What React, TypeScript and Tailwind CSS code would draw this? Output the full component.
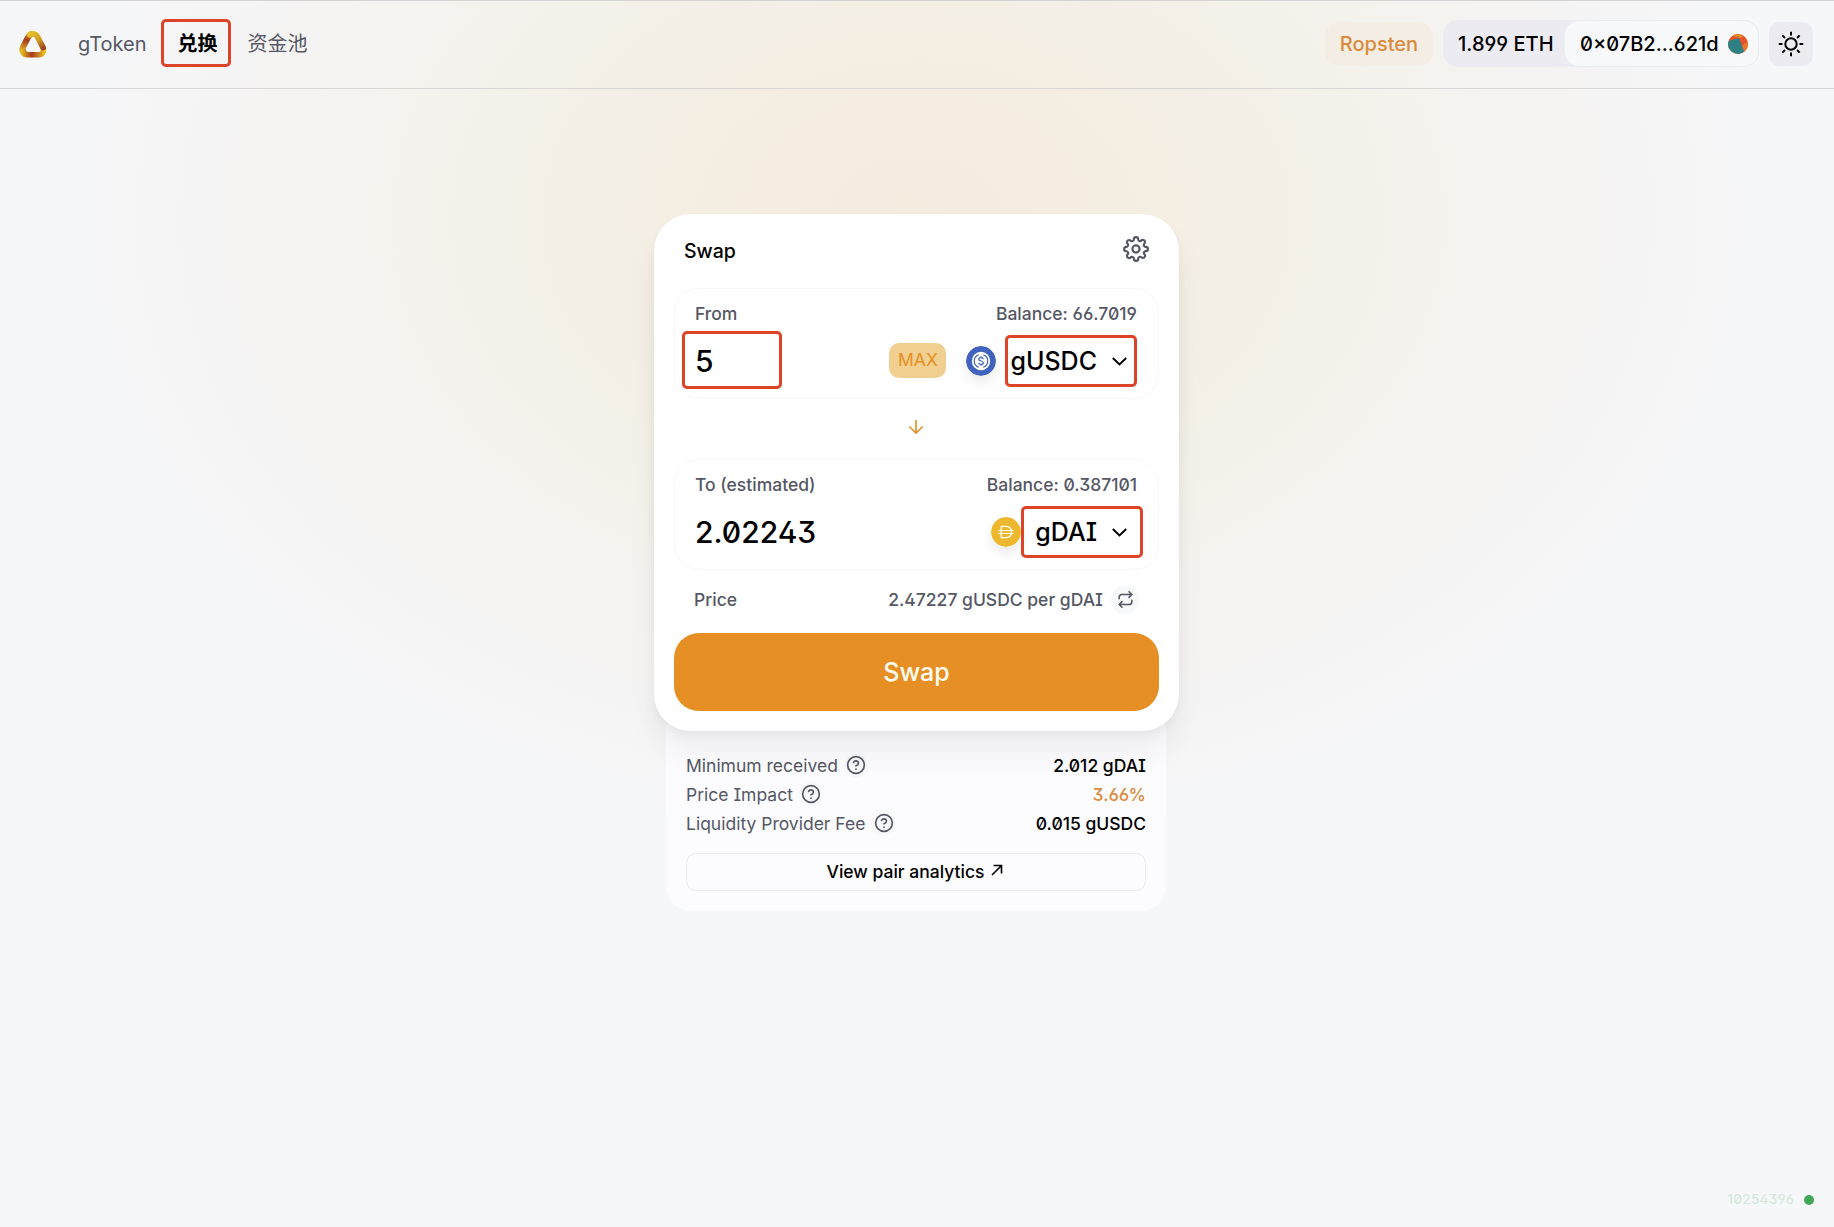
import type { ReactNode } from "react";

const inter = "font-['Inter','Noto_Sans_CJK_SC',sans-serif]";

function Mark({ className }: { className: string }) {
  return <span className={`pointer-events-none absolute rounded-[5px] border-[3px] border-[#dc4327] ${className}`} />;
}

function Logo() {
  return (
    <svg width="28" height="28" viewBox="0 0 28 28" fill="none">
      <defs>
        <linearGradient id="l1" x1="12" y1="1" x2="4" y2="22" gradientUnits="userSpaceOnUse">
          <stop offset="0" stopColor="#e3b52a" />
          <stop offset="0.45" stopColor="#a63a1c" />
          <stop offset="1" stopColor="#e6bd25" />
        </linearGradient>
        <linearGradient id="l2" x1="12" y1="3" x2="26" y2="20" gradientUnits="userSpaceOnUse">
          <stop offset="0" stopColor="#e8c02a" />
          <stop offset="0.5" stopColor="#cf9a22" />
          <stop offset="1" stopColor="#8f2a1c" />
        </linearGradient>
        <linearGradient id="l3" x1="2" y1="24" x2="26" y2="24" gradientUnits="userSpaceOnUse">
          <stop offset="0" stopColor="#e6c425" />
          <stop offset="0.45" stopColor="#a8391c" />
          <stop offset="1" stopColor="#ecc524" />
        </linearGradient>
      </defs>
      <path d="M12 4.200C10.500 5 9.500 6.500 8.700 8L4 17C2.600 20 3.500 23 6 24.300" stroke="url(#l1)" strokeWidth="6" strokeLinecap="round" />
      <path d="M4.500 21C5 23.500 7 24.800 9.500 24.800H20C23.500 24.800 25.500 21.500 24 18" stroke="url(#l3)" strokeWidth="5.500" strokeLinecap="round" />
      <path d="M10.800 4.700C13.500 3 17 4 18.600 7L24 17.500" stroke="url(#l2)" strokeWidth="5.800" strokeLinecap="round" />
    </svg>
  );
}

function Sun() {
  return (
    <svg width="28" height="28" viewBox="0 0 24 24" fill="none" stroke="#000" strokeWidth="1.700" strokeLinecap="butt">
      <circle cx="12" cy="12" r="4.900" />
      <path d="M12 1.500v3.200M12 19.300v3.200M1.500 12h3.200M19.300 12h3.200M4.600 4.600l2.200 2.200M17.200 17.200l2.200 2.200M4.600 19.400l2.200-2.200M17.200 6.800l2.200-2.200" />
    </svg>
  );
}

function Gear() {
  return (
    <svg width="26" height="26" viewBox="0 0 24 24" fill="none" stroke="#555764" strokeWidth="2" strokeLinecap="round" strokeLinejoin="round">
      <circle cx="12" cy="12" r="3.300" />
      <path d="M19.400 15a1.650 1.650 0 0 0 .33 1.820l.06.06a2 2 0 0 1 0 2.830 2 2 0 0 1-2.830 0l-.06-.06a1.650 1.650 0 0 0-1.820-.33 1.650 1.650 0 0 0-1 1.510V21a2 2 0 0 1-2 2 2 2 0 0 1-2-2v-.09A1.650 1.650 0 0 0 9 19.400a1.650 1.650 0 0 0-1.820.33l-.06.06a2 2 0 0 1-2.830 0 2 2 0 0 1 0-2.830l.06-.06a1.650 1.650 0 0 0 .33-1.820 1.650 1.650 0 0 0-1.510-1H3a2 2 0 0 1-2-2 2 2 0 0 1 2-2h.09A1.650 1.650 0 0 0 4.600 9a1.650 1.650 0 0 0-.33-1.820l-.06-.06a2 2 0 0 1 0-2.830 2 2 0 0 1 2.830 0l.06.06a1.650 1.650 0 0 0 1.820.33H9a1.650 1.650 0 0 0 1-1.510V3a2 2 0 0 1 2-2 2 2 0 0 1 2 2v.09a1.650 1.650 0 0 0 1 1.510 1.650 1.650 0 0 0 1.820-.33l.06-.06a2 2 0 0 1 2.830 0 2 2 0 0 1 0 2.830l-.06.06a1.650 1.650 0 0 0-.33 1.820V9a1.650 1.650 0 0 0 1.510 1H21a2 2 0 0 1 2 2 2 2 0 0 1-2 2h-.09a1.650 1.650 0 0 0-1.510 1z" />
    </svg>
  );
}

function Chevron() {
  return (
    <svg width="15" height="9" viewBox="0 0 15 9" fill="none" stroke="#000" strokeWidth="1.900" className="-ml-px">
      <path d="M0.800 1L7.500 7.500L14.200 1" />
    </svg>
  );
}

function Usdc() {
  return (
    <svg width="30" height="30" viewBox="0 0 30 30" fill="none" className="rounded-full shadow-[0_7px_12px_rgba(0,0,0,0.08)]">
      <circle cx="15" cy="15" r="15" fill="#4263bd" />
      <circle cx="15" cy="15" r="9.200" fill="#fff" />
      <path d="M12.700 8.700a6.700 6.700 0 0 0 0 12.600M17.300 8.700a6.700 6.700 0 0 1 0 12.600" stroke="#4263bd" strokeWidth="1.200" />
      <path d="M17.300 13.300c-.1-1-1-1.700-2.300-1.700s-2.300.7-2.300 1.700c0 2.300 4.700 1.100 4.700 3.400 0 1-1 1.700-2.400 1.700s-2.300-.7-2.400-1.700M15 10.200v1.400M15 18.400v1.400" stroke="#4263bd" strokeWidth="1.200" />
    </svg>
  );
}

function Dai() {
  return (
    <svg width="30" height="30" viewBox="0 0 30 30" fill="none" className="rounded-full shadow-[0_7px_12px_rgba(0,0,0,0.08)]">
      <circle cx="15" cy="15" r="15" fill="#eeb82e" />
      <path d="M10.200 9.300h4.600c3.500 0 5.600 2.400 5.600 5.700s-2.100 5.700-5.600 5.700h-4.600zM7.500 13.500h15M7.500 16.500h15" stroke="#fff" strokeWidth="1.200" />
    </svg>
  );
}

function Help() {
  return (
    <span className="-mt-px flex size-[25px] items-center justify-center rounded-full bg-[#f7f8fa]">
      <svg width="20" height="20" viewBox="0 0 24 24" fill="none" stroke="#555764" strokeWidth="2" strokeLinecap="round" strokeLinejoin="round">
        <circle cx="12" cy="12" r="10" />
        <path d="M9.090 9a3 3 0 0 1 5.830 1c0 2-3 3-3 3M12 17h.01" />
      </svg>
    </span>
  );
}

function TokenPanel({ label, balance, amount, children }: { label: string; balance: string; amount: ReactNode; children: ReactNode }) {
  return (
    <section className="h-[111px] rounded-[25px] border border-[#f7f8fa] pl-5 pr-[21px] pt-[15px]">
      <div className="flex h-5 items-center justify-between text-[17.5px] font-medium text-[#555764]">
        <span>{label}</span>
        <span>{balance}</span>
      </div>
      <div className="mt-[17px] flex h-10 items-center">
        <div className="relative flex-1 text-[30px] font-medium leading-10">{amount}</div>
        {children}
      </div>
    </section>
  );
}

function Detail({ label, value, tone }: { label: string; value: string; tone: string }) {
  return (
    <div className="flex h-[29px] items-center justify-between text-[17.5px]">
      <span className="flex items-center gap-[6px] text-[#555764]">
        <span className="pt-px">{label}</span>
        <Help />
      </span>
      <span className={`pt-px font-medium ${tone}`}>{value}</span>
    </div>
  );
}

export default function App() {
  return (
    <div className={`flex h-[1227px] w-full flex-col overflow-hidden bg-[#f6f7f9] bg-[radial-gradient(880px_640px_at_50%_220px,#f5ebdf_0%,#f4eee3_28%,#f4f2ec_56%,#f5f4f4_80%,#f6f7f9_100%)] text-black [font-feature-settings:'ss01','zero','cv08'] ${inter}`}>
      <header className="flex h-[89px] w-full shrink-0 items-center border-y border-b-[#d6d6d7] border-t-[#d3d3d6] pb-[2px] pl-[19px] pr-[21px] text-[20px]">
        <Logo />
        <nav className="ml-[31px] flex items-center text-[#555764]">
          <a>gToken</a>
          <a className="relative ml-[31px] font-semibold text-black">
            兑换
            <Mark className="-left-[17px] -right-[13px] -top-[10px] h-[48px]" />
          </a>
          <a className="ml-[30px]">资金池</a>
        </nav>
        <div className="ml-auto flex items-center font-medium">
          <span className="flex h-[44px] w-[108px] items-center justify-center rounded-[15px] bg-[#f4ede4] text-[#da8a3c]">Ropsten</span>
          <div className="ml-[10px] flex h-[47px] items-center rounded-[15px] bg-[#ecebf1]">
            <span className="w-[121px] whitespace-nowrap pl-[15px]">1.899 ETH</span>
            <span className="flex h-[47px] w-[195px] items-center justify-between whitespace-nowrap rounded-[15px] border border-[#ecedf1] bg-[#f7f8fa] pl-[15px] pr-[10px]">
              0×07B2...621d
              <svg width="20" height="20" viewBox="0 0 20 20" className="rounded-full">
                <rect width="20" height="20" fill="#e8512a" />
                <path d="M3 0H17L13 4L8 3Z" fill="#e28a2a" />
                <path d="M14 12L20 7V20H14Z" fill="#e8752c" />
                <path d="M0 7L11 4L17 20H0Z" fill="#2f8083" />
              </svg>
            </span>
          </div>
          <span className="ml-[10px] flex size-[44px] items-center justify-center rounded-[10px] bg-[#ecebf1]">
            <Sun />
          </span>
        </div>
      </header>

      <main className="ml-[654px] mt-[125px] flex w-[525px] flex-col">
        <div className="relative z-10 h-[517px] w-full rounded-[37px] bg-white px-5 shadow-[0_0_1px_rgba(0,0,0,0.01),0_5px_10px_rgba(0,0,0,0.04),0_20px_30px_rgba(0,0,0,0.05),0_30px_40px_rgba(0,0,0,0.01)]">
          <div className="flex h-[74px] items-center justify-between pl-[10px] pr-[10px] text-[19.5px] font-medium">
            <span className="pt-px">Swap</span>
            <span className="-mt-[4px]"><Gear /></span>
          </div>
          <TokenPanel
            label="From"
            balance="Balance: 66.7019"
            amount={
              <>
                5
                <Mark className="-left-[13px] -top-[10px] h-[58px] w-[100px]" />
              </>
            }
          >
            <span className="-mt-px flex h-[35px] w-[57px] items-center justify-center rounded-[10px] bg-[#f0cf90] text-[17.5px] text-[#e68f22]">MAX</span>
            <span className="ml-5"><Usdc /></span>
            <span className="relative ml-[14px] flex items-center text-[25px] font-medium">
              <span className="mr-4 pt-[2px]">gUSDC</span>
              <Chevron />
              <span className="w-[10px]" />
              <Mark className="-left-[5px] -top-[6px] right-0 h-[52px]" />
            </span>
          </TokenPanel>
          <div className="flex h-[60px] items-center justify-center pb-[5px] pr-[2px]">
            <svg width="16" height="16" viewBox="0 0 16 16" fill="none" stroke="#e0942f" strokeWidth="1.700">
              <path d="M8 1V14M1.300 7.500L8 14L14.700 7.500" />
            </svg>
          </div>
          <TokenPanel label="To (estimated)" balance="Balance: 0.387101" amount="2.02243">
            <span><Dai /></span>
            <span className="relative ml-[14px] flex items-center text-[25px] font-medium">
              <span className="mr-4 pt-[2px]">gDAI</span>
              <Chevron />
              <span className="w-[10px]" />
              <Mark className="-left-[14px] -top-[6px] -right-[6px] h-[52px]" />
            </span>
          </TokenPanel>
          <div className="flex h-[63px] items-center pb-[3px] pl-5 pr-5 text-[17.5px] font-medium text-[#555764]">
            <span className="mr-auto">Price</span>
            <span>2.47227 gUSDC per gDAI</span>
            <span className="-mt-px ml-2 flex size-[28px] items-center justify-center rounded-full bg-[#f7f8fa]">
              <svg width="17" height="17" viewBox="0 0 24 24" fill="none" stroke="#555764" strokeWidth="2.200" strokeLinecap="round" strokeLinejoin="round">
                <path d="M17 1l4 4-4 4M3 11V9a4 4 0 0 1 4-4h14M7 23l-4-4 4-4M21 13v2a4 4 0 0 1-4 4H3" />
              </svg>
            </span>
          </div>
          <button className="flex h-[78px] w-full items-center justify-center rounded-[25px] bg-[#e68f24] pt-px text-[25px] font-medium text-[#fffdf0]">Swap</button>
        </div>

        <div className="-mt-[24px] ml-3 h-[204px] w-[500px] rounded-b-[25px] bg-[#fcfcfe] px-5 pt-[44px]">
          <Detail label="Minimum received" value="2.012 gDAI" tone="text-black" />
          <Detail label="Price Impact" value="3.66%" tone="text-[#da8a3c]" />
          <Detail label="Liquidity Provider Fee" value="0.015 gUSDC" tone="text-black" />
          <a className="mt-[15px] flex h-[38px] items-center justify-center gap-[7px] rounded-[10px] border border-[#ebebf0] pr-[2px] text-[17.5px] font-medium">
            View pair analytics
            <svg width="12" height="12" viewBox="0 0 12 12" fill="none" stroke="#000" strokeWidth="1.600" className="-mt-1">
              <path d="M1 11L10 2M2.500 1.500H10.500V9.500" />
            </svg>
          </a>
        </div>
      </main>

      <footer className="mt-auto flex h-[54px] w-full items-center justify-end gap-[10px] pb-px pr-5 text-[13.750px] tracking-[0.3px] text-[#d3e6da]">
        <span>10254396</span>
        <span className="size-[10px] rounded-full bg-[#41a857]" />
      </footer>
    </div>
  );
}
